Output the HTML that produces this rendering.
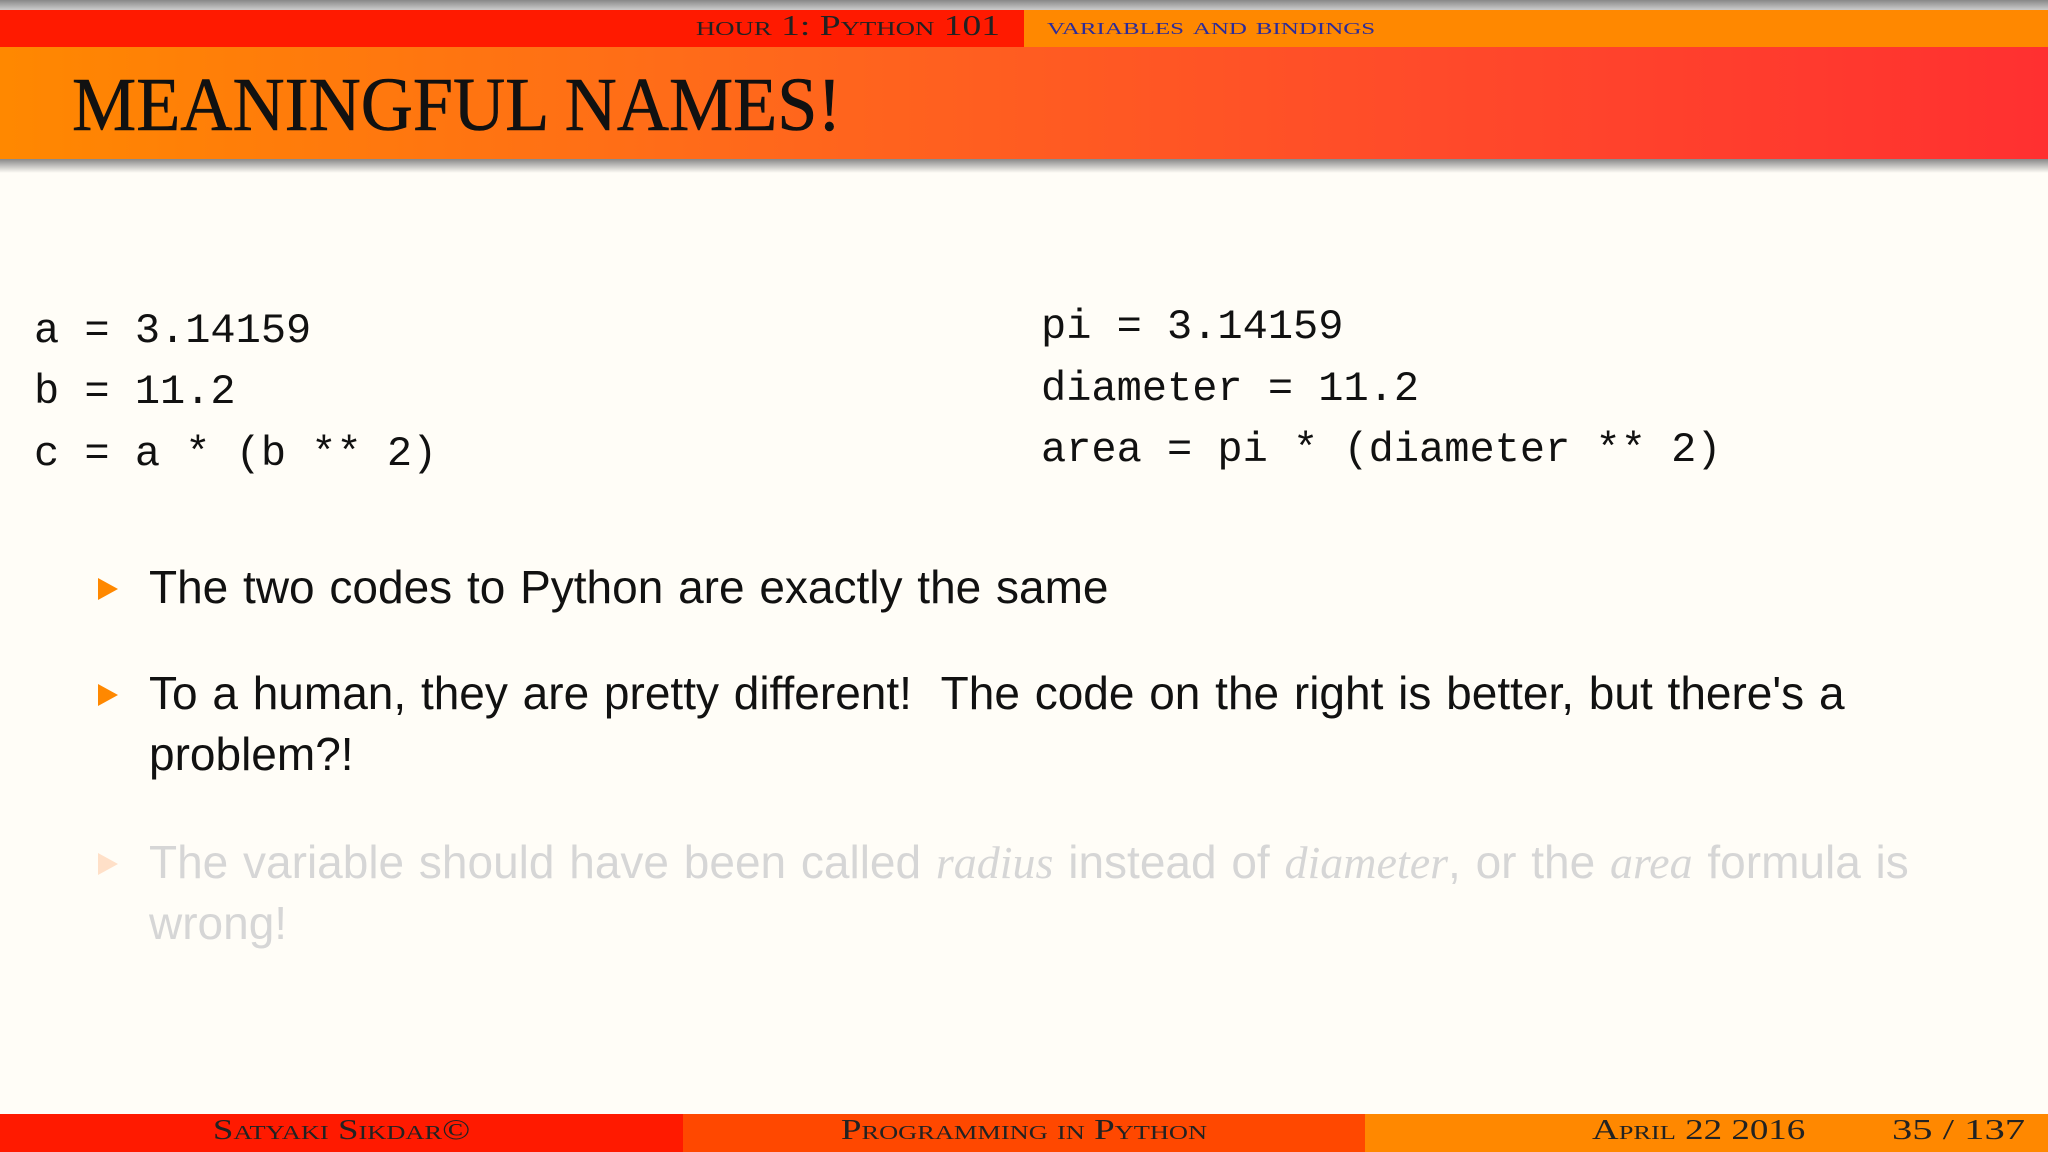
<!DOCTYPE html>
<html><head><style>
*{margin:0;padding:0}
body{width:2048px;height:1152px;position:relative;overflow:hidden;background:#fffdf7;font-family:"Liberation Sans",sans-serif}
.a{position:absolute;white-space:nowrap;line-height:1}
.m{font-family:"Liberation Mono",monospace;font-size:42px;color:#111}
.b{font-size:46px;color:#111;word-spacing:2px}
.f{color:#d6d6d6}
.tri{position:absolute;width:0;height:0;border-top:11px solid transparent;border-bottom:11px solid transparent;border-left:20px solid #ff8800}
.sc{font-family:"Liberation Serif",serif;font-variant:small-caps}
.ft{top:1117px;font-size:28px;color:#222;transform:scaleX(1.32)}
</style></head><body>
<div style="position:absolute;left:0;top:0;width:2048px;height:10px;background:linear-gradient(#888,#ccc)"></div>
<div style="position:absolute;left:0;top:10px;width:1024px;height:37px;background:#ff1a00"></div>
<div style="position:absolute;left:1024px;top:10px;width:1024px;height:37px;background:#ff8800"></div>
<div class="a sc" style="right:1048px;top:13px;font-size:28px;color:#222;transform:scaleX(1.34);transform-origin:right">hour 1: Python 101</div>
<div class="a sc" style="left:1047px;top:15px;font-size:24px;color:#2c2c9a;transform:scaleX(1.47);transform-origin:left">variables and bindings</div>
<div style="position:absolute;left:0;top:47px;width:2048px;height:112px;background:linear-gradient(90deg,#ff8800,#ff6a1a 35%,#ff4a2a 70%,#ff3030)"></div>
<div style="position:absolute;left:0;top:159px;width:2048px;height:14px;background:linear-gradient(#888,#fffdf7)"></div>
<div class="a" style="left:72px;top:67px;font-family:'Liberation Serif',serif;font-size:76px;color:#111;transform:scaleX(0.95);transform-origin:left;-webkit-text-stroke:0.6px #111">MEANINGFUL NAMES!</div>

<div class="a m" style="left:34px;top:310px">a = 3.14159</div>
<div class="a m" style="left:34px;top:371px">b = 11.2</div>
<div class="a m" style="left:34px;top:433px">c = a * (b ** 2)</div>
<div class="a m" style="left:1041px;top:306px">pi = 3.14159</div>
<div class="a m" style="left:1041px;top:368px">diameter = 11.2</div>
<div class="a m" style="left:1041px;top:429px">area = pi * (diameter ** 2)</div>

<div class="tri" style="left:98px;top:578px"></div>
<div class="a b" style="left:149px;top:564px">The two codes to Python are exactly the same</div>
<div class="tri" style="left:98px;top:684px"></div>
<div class="a b" style="left:149px;top:670px">To a human, they are pretty different!&nbsp; The code on the right is better, but there's a</div>
<div class="a b" style="left:149px;top:731px">problem?!</div>
<div class="tri" style="left:98px;top:853px;border-left-color:#ffe0c8"></div>
<div class="a b f" style="left:149px;top:839px">The variable should have been called <i style="font-family:'Liberation Serif',serif">radius</i> instead of <i style="font-family:'Liberation Serif',serif">diameter</i>, or the <i style="font-family:'Liberation Serif',serif">area</i> formula is</div>
<div class="a b f" style="left:149px;top:900px">wrong!</div>

<div style="position:absolute;left:0;top:1114px;width:683px;height:38px;background:#ff1a00"></div>
<div style="position:absolute;left:683px;top:1114px;width:682px;height:38px;background:#ff4800"></div>
<div style="position:absolute;left:1365px;top:1114px;width:683px;height:38px;background:#ff8800"></div>
<div class="a sc ft" style="left:0;width:683px;text-align:center">Satyaki Sikdar©</div>
<div class="a sc ft" style="left:683px;width:682px;text-align:center">Programming in Python</div>
<div class="a sc ft" style="left:1592px;transform-origin:left">April 22 2016</div>
<div class="a sc ft" style="left:1892px;transform-origin:left;transform:scaleX(1.45)">35 / 137</div>
</body></html>
